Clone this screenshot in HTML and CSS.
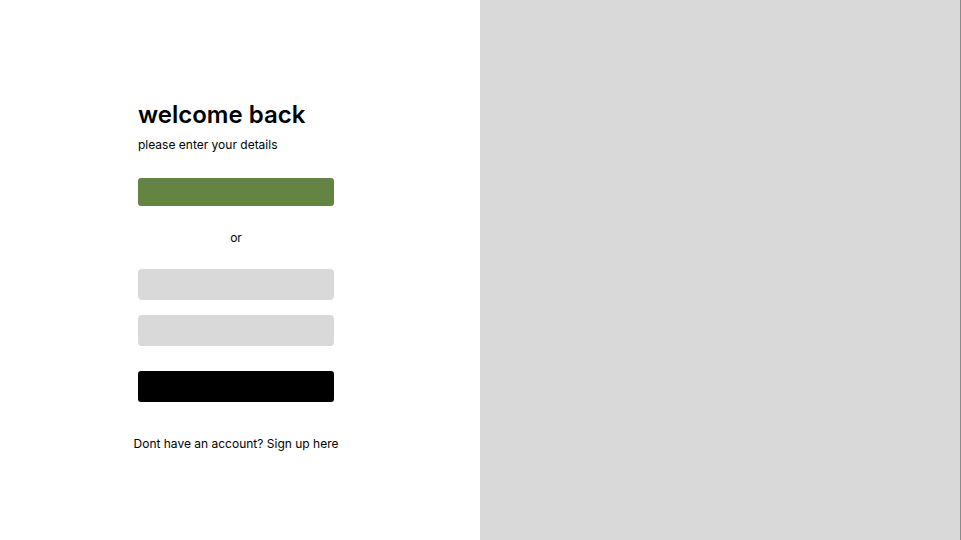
FILE: index.html
```html
<!DOCTYPE html>
<html>
<head>
<meta charset="utf-8">
<link rel="stylesheet" href="styles.css">
</head>
<body>
<div class="page">
  <main class="left">
    <div class="form">
      <h1 class="title">welcome back</h1>
      <p class="subtitle">please enter your details</p>
      <div class="btn btn-green"></div>
      <p class="or">or</p>
      <div class="input"></div>
      <div class="input input-second"></div>
      <div class="btn btn-black"></div>
      <p class="signup">Dont have an account? Sign up here</p>
    </div>
  </main>
  <aside class="right"></aside>
  <div class="edge"></div>
</div>
</body>
</html>
```
FILE: styles.css
```css
html, body {
  margin: 0;
  padding: 0;
  height: 100%;
  background: #ffffff;
  font-family: Inter, "Liberation Sans", sans-serif;
  color: #000;
}
.page {
  display: flex;
  height: 540px;
  width: 961px;
}
.left {
  width: 480px;
  flex: none;
  padding-left: 138px;
  padding-top: 100px;
  box-sizing: border-box;
}
.form {
  width: 196px;
  display: flex;
  flex-direction: column;
}
.title {
  margin: 0;
  font-size: 24px;
  font-weight: 600;
  line-height: 29px;
}
.subtitle {
  margin: 8px 0 0;
  font-size: 12px;
  line-height: 15px;
}
.btn {
  height: 28px;
  border-radius: 3px;
}
.btn-green {
  margin-top: 26px;
  background: #638442;
}
.or {
  margin: 24px 0 0;
  font-size: 12px;
  line-height: 15px;
  text-align: center;
}
.input {
  margin-top: 24px;
  height: 31px;
  border-radius: 4px;
  background: #d9d9d9;
}
.input-second {
  margin-top: 15px;
}
.btn-black {
  margin-top: 25px;
  height: 31px;
  background: #000;
}
.signup {
  margin: 34px -20px 0;
  font-size: 12px;
  line-height: 15px;
  text-align: center;
  white-space: nowrap;
}
.right {
  width: 480px;
  flex: none;
  background: #d9d9d9;
}
.edge {
  width: 1px;
  flex: none;
  background: #8a8a8a;
}
```
